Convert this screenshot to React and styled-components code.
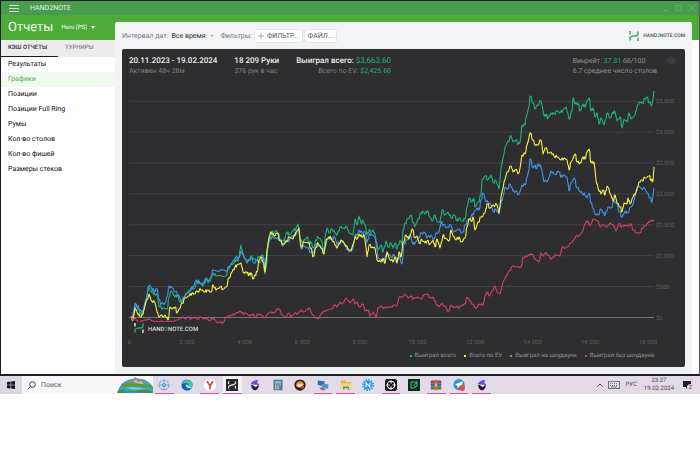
import React from 'react';
import styled, { createGlobalStyle } from 'styled-components';

const menu = [
  'Результаты',
  'Графики',
  'Позиции',
  'Позиции Full Ring',
  'Румы',
  'Кол-во столов',
  'Кол-во фишей',
  'Размеры стеков',
];

const series = [
  {
    name: 'Выиграл всего',
    color: '#1fb47e',
    points:
      '131,317 132,320 135,307 137,306 140,313 143,315 144,307 146,302 148,287 151,291 153,292 155,295 157,294 159,307 163,308 167,309 169,297 171,291 175,297 177,295 180,302 183,300 186,294 189,292 192,287 194,289 197,282 200,283 203,286 206,280 209,282 213,273 216,276 226,276 228,269 231,265 234,263 236,259 238,261 241,245 243,255 247,262 251,256 253,258 256,260 259,257 263,255 265,274 267,260 268,243 271,232 273,233 276,231 278,233 281,242 284,239 287,232 289,235 293,231 296,228 298,224 300,240 302,242 305,240 307,237 309,243 311,242 313,248 316,240 318,237 321,240 324,253 325,237 327,228 329,233 332,229 335,233 337,235 340,227 343,228 347,227 349,233 353,235 355,219 357,225 359,216 361,223 363,221 365,225 367,235 369,230 371,232 373,230 375,235 378,250 381,245 383,252 386,241 388,247 391,243 393,248 395,243 397,249 400,240 402,245 403,230 405,223 408,219 411,215 413,223 415,226 418,219 421,213 423,212 425,214 427,211 430,217 432,221 435,215 437,222 440,222 442,210 445,215 448,212 451,218 454,215 457,221 459,218 462,221 465,219 467,207 469,198 472,202 474,198 475,207 478,202 481,195 482,180 485,176 488,180 491,175 493,182 496,181 499,189 501,168 505,147 508,141 511,136 513,142 516,140 518,144 520,142 522,125 525,125 526,117 529,107 530,96 533,103 535,109 537,105 541,101 544,116 546,115 548,118 551,113 554,114 557,111 560,113 563,110 566,107 569,119 572,111 573,98 575,104 578,103 580,111 583,104 585,107 587,101 589,98 591,111 593,108 595,117 597,113 599,124 601,118 604,125 607,113 610,118 613,112 615,112 617,121 620,117 622,128 624,119 627,122 629,113 631,119 635,115 637,107 639,102 642,103 645,99 647,97 649,103 652,105 654,91',
  },
  {
    name: 'Всего по EV',
    color: '#f2f24a',
    points:
      '131,317 133,320 135,308 137,312 140,317 143,314 145,305 149,294 151,300 155,303 157,312 159,317 165,315 168,320 170,307 172,309 175,307 177,313 179,309 182,303 185,298 189,296 192,293 194,294 197,291 201,290 205,292 207,290 211,292 213,285 216,290 220,287 223,289 226,287 229,278 232,272 235,267 237,265 241,263 243,272 247,273 249,275 251,273 253,279 255,275 257,272 259,260 261,257 263,262 265,272 267,250 269,237 271,232 274,236 277,233 280,241 283,244 287,241 289,237 293,239 296,232 299,228 300,240 301,247 304,242 308,243 311,248 313,257 316,247 318,243 321,248 324,254 326,240 329,237 331,238 335,245 337,248 341,240 344,243 348,249 351,251 355,237 357,239 359,234 362,237 364,235 366,247 367,257 369,245 372,247 375,248 377,260 381,262 383,259 385,263 387,252 389,258 393,262 395,257 397,263 399,252 401,257 403,242 406,235 409,239 412,229 415,238 417,236 419,243 422,240 425,243 427,241 430,244 433,240 435,247 437,239 440,248 443,235 445,238 449,241 451,230 453,236 456,240 459,237 461,242 465,238 467,227 469,219 472,221 473,217 475,230 478,222 481,217 485,213 487,204 490,208 493,205 497,205 499,213 501,197 504,182 507,172 511,166 513,172 515,170 519,173 522,155 525,154 527,145 530,133 533,140 535,145 537,145 541,140 543,154 545,148 549,153 551,152 554,156 557,157 561,160 564,158 567,160 569,170 571,162 575,154 577,162 580,163 583,157 585,159 587,152 589,149 591,163 594,162 596,180 598,188 601,194 603,190 605,195 607,186 611,195 613,201 615,195 617,203 620,207 622,212 624,203 627,204 628,198 630,204 633,197 636,192 639,182 642,180 645,178 649,176 651,180 653,181 654,167',
  },
  {
    name: 'Выиграл на шоудауне',
    color: '#3f96ea',
    points:
      '131,317 132,319 135,303 137,306 139,308 142,313 145,303 147,295 149,285 151,287 154,291 157,289 159,300 161,304 165,303 167,297 169,286 172,288 175,292 179,295 181,302 184,297 187,293 191,289 193,287 196,280 199,282 202,285 205,279 209,280 211,277 213,270 226,271 229,267 232,263 235,258 239,257 241,251 244,257 247,263 251,258 254,263 257,260 260,263 263,257 265,267 267,250 270,238 273,237 277,239 280,239 283,246 285,240 288,242 291,237 294,235 297,232 299,230 301,248 304,246 307,248 311,252 313,253 316,244 319,246 323,250 325,248 327,240 329,237 333,240 334,236 337,244 340,242 343,241 346,247 349,252 353,249 355,235 357,235 359,230 362,233 365,232 367,243 369,235 371,234 375,237 378,258 381,260 385,258 387,252 391,257 394,255 397,261 399,257 402,264 404,243 407,240 410,235 413,244 415,243 419,237 421,233 425,233 427,238 431,235 433,239 437,233 439,232 441,222 443,225 447,227 451,225 453,232 457,230 463,232 465,225 468,220 471,217 474,212 477,208 479,210 481,200 483,193 486,202 490,203 493,211 496,210 499,214 501,203 503,197 505,187 507,189 510,184 513,191 515,192 519,194 522,185 525,185 527,177 529,170 530,159 533,168 535,165 536,169 538,164 541,167 544,182 548,180 551,171 554,174 559,172 561,177 563,175 567,177 569,191 571,183 574,178 577,188 580,191 582,193 585,195 587,198 589,193 591,203 593,208 595,214 598,215 601,209 603,213 605,215 608,207 611,208 614,201 617,204 619,212 622,217 625,211 627,213 631,207 633,205 635,195 638,186 641,188 645,189 647,193 650,198 652,202 654,188',
  },
  {
    name: 'Выиграл без шоудауна',
    color: '#d43f70',
    points:
      '131,317 133,320 135,318 138,322 143,321 148,319 153,321 158,322 167,321 173,322 180,318 183,317 185,319 188,317 191,319 195,317 197,319 201,317 203,319 207,318 209,321 212,318 215,320 217,323 220,322 223,323 226,317 229,316 232,315 235,314 240,311 243,314 245,313 250,316 253,314 255,317 258,314 261,315 265,318 268,313 271,312 274,313 277,309 279,309 282,315 285,317 289,313 291,317 295,313 297,314 301,310 303,312 307,310 309,308 312,314 315,317 318,319 321,314 323,312 327,310 331,309 335,305 337,307 340,302 342,304 346,298 350,303 353,299 355,304 357,302 359,307 363,304 365,311 368,310 370,316 373,312 376,317 378,308 381,306 383,308 387,307 391,307 394,305 397,306 399,297 402,297 405,294 408,298 411,296 413,299 417,297 421,299 424,295 427,294 430,298 433,297 436,304 439,307 441,304 445,306 448,312 451,305 454,308 457,306 459,308 462,305 465,304 467,297 470,301 472,304 476,308 479,304 483,305 485,296 487,292 489,296 492,291 495,286 497,292 500,294 503,282 506,276 509,271 513,266 516,267 521,267 523,257 526,257 529,255 532,254 535,259 539,262 541,253 543,256 545,253 548,255 551,259 553,257 556,255 560,256 562,247 565,248 567,247 571,243 573,241 576,236 579,236 582,232 585,224 587,221 590,226 593,219 598,221 600,227 603,225 607,227 610,223 614,226 616,231 619,223 621,227 625,225 628,226 631,224 633,230 637,233 640,233 642,228 645,226 648,223 650,221 654,220',
  },
];

const money = ['$0', '$500', '$1,000', '$1,500', '$2,000', '$2,500', '$3,000', '$3,500'];
const hands = ['0', '2 000', '4 000', '6 000', '8 000', '10 000', '12 000', '14 000', '16 000', '18 000'];

// green is drawn first, then blue, yellow and pink on top
const drawOrder = [0, 2, 1, 3];

// adds the small swings between the stored points
const roughen = (points, amount) => {
  const list = points.split(' ').map((p) => p.split(',').map(Number));
  const out = [];
  list.forEach(([x, y], i) => {
    out.push(`${x},${y}`);
    const next = list[i + 1];
    if (!next || next[0] - x < 2) return;
    const swing = Math.sin(x * 12.9898) * amount;
    out.push(`${x + (next[0] - x) * 0.4},${y + (next[1] - y) * 0.3 + swing}`);
    out.push(`${x + (next[0] - x) * 0.7},${y + (next[1] - y) * 0.7 - swing}`);
  });
  return out.join(' ');
};

const LogoMark = ({ light }) => (
  <g fill="none" strokeWidth="1.4">
    <path d="M1 0v3.500M9 6.500V10" stroke={light ? '#e8e8e8' : '#77797b'} />
    <path d="M9 0.500v3.400L7.500 4.800L2.500 5.400L1 6.300V9.500" stroke="#2fa95a" />
  </g>
);

const Chart = () => (
  <ChartSvg viewBox="122 82 563 267" role="img" aria-label="Графики">
    {money.map((label, i) => {
      const y = 317.5 - i * 30.9;
      return (
        <g key={label}>
          <line x1="129" x2="654" y1={y} y2={y} stroke={i ? '#414344' : '#747677'} strokeWidth="1" />
          <AxisText x="656" y={y + 2}>{label}</AxisText>
        </g>
      );
    })}
    {hands.map((label, i) => (
      <AxisText key={label} x={129.5 + i * 57.6} y="344" textAnchor="middle">
        {label}
      </AxisText>
    ))}
    {drawOrder.map((n) => (
      <polyline
        key={n}
        points={roughen(series[n].points, n === 3 ? 0.8 : 1.6)}
        fill="none"
        stroke={series[n].color}
        strokeWidth="1.1"
        strokeLinejoin="round"
      />
    ))}
    <rect x="133" y="322" width="64" height="12" fill="#2e2d2f" />
    <g transform="translate(134 323)">
      <LogoMark light />
    </g>
    <WatermarkText x="148" y="331">
      HAND<tspan fill="#35a35a">2</tspan>NOTE.COM
    </WatermarkText>
  </ChartSvg>
);

const appIcons = [
  {
    name: 'Atom',
    open: true,
    art: (
      <g fill="none" stroke="#3d8fd0" strokeWidth="1.2">
        <circle cx="8" cy="8" r="6.5" strokeDasharray="4 1.5" />
        <circle cx="8" cy="8" r="2.4" />
        <path d="M8 1v14M1 8h14" stroke="#63a9dc" />
      </g>
    ),
  },
  {
    name: 'Edge',
    art: (
      <g>
        <circle cx="8" cy="8" r="7.5" fill="#1877c4" />
        <path d="M1 7C2 1 14-1 15.5 7c0 4-5 4-6 2 1-2-1-4-3-4S2 6 1 7z" fill="#3ec9a4" />
        <path d="M6 7c-3 3 0 7 6 6-3 3-8 2-10-1-2-4 1-6 4-5z" fill="#145aa5" />
        <path d="M7 7c-1 3 1 5 6 5l2-2c-3 1-5 0-6-1z" fill="#e7f4fa" />
      </g>
    ),
  },
  {
    name: 'Yandex',
    open: true,
    art: (
      <g>
        <circle cx="8" cy="8" r="8" fill="#fff" />
        <path d="M4 3l4 6 4-6M8 8v6" fill="none" stroke="#e4402f" strokeWidth="2.2" />
      </g>
    ),
  },
  {
    name: 'Hand2Note',
    open: true,
    active: true,
    art: (
      <g>
        <rect width="16" height="16" fill="#22282b" />
        <path d="M3.500 3v4M12.500 3v3L10 7.500 6 8.500 3.500 10v3M12.500 9v4" fill="none" stroke="#eee" strokeWidth="1.5" />
      </g>
    ),
  },
  {
    name: 'Acorn',
    art: (
      <g>
        <path d="M2 7c2-4 5-5 10-6l-1 4 3 3z" fill="#7046dc" />
        <path d="M3 8h10c0 5-3 7-5 7s-5-2-5-7z" fill="#262335" />
        <path d="M5 8h7l-3 3z" fill="#f3edf6" />
      </g>
    ),
  },
  {
    name: 'Calculator',
    art: (
      <g>
        <rect x="2" y="1" width="12" height="14" fill="#5d7180" />
        <rect x="4" y="3" width="8" height="3" fill="#7cd0ee" />
        <path d="M4 8h8M4 10.500h8M4 13h8" stroke="#dbe6ec" strokeWidth="1.4" strokeDasharray="2 1" />
        <rect x="10" y="9" width="2" height="5" fill="#2b84c5" />
      </g>
    ),
  },
  {
    name: 'Tracker',
    art: (
      <g>
        <circle cx="8" cy="8" r="7.5" fill="#28211f" />
        <path d="M2.500 9c0-8 10-8 11-1l-3 1-3-2-3 4z" fill="#e79a2e" />
        <path d="M5 7h6l2 4H5z" fill="#f4f1ec" />
        <circle cx="11" cy="11" r="2" fill="#cc452e" />
      </g>
    ),
  },
  {
    name: 'Remote',
    open: true,
    art: (
      <g>
        <path d="M1 2l9 1v7l-9-2z" fill="#336cbd" />
        <path d="M6 6l9 1v6l-8-1z" fill="#5592d7" />
        <path d="M3 11l6 1 3 3H6z" fill="#76797d" />
      </g>
    ),
  },
  {
    name: 'Explorer',
    open: true,
    art: (
      <g>
        <path d="M1 2h6l1 2h7v10H1z" fill="#e8b64a" />
        <path d="M1 6h14v8H1z" fill="#f8d778" />
        <path d="M4 14v-4h8v4h-2v-2H6v2z" fill="#4b91c9" />
      </g>
    ),
  },
  {
    name: 'Notes',
    art: (
      <g>
        <circle cx="8" cy="8" r="6" fill="#2598e5" />
        <circle cx="8" cy="8" r="7" fill="none" stroke="#2598e5" strokeWidth="2" strokeDasharray="2 1.600" />
        <path d="M5.500 11V5l5 6V5" fill="none" stroke="#fff" strokeWidth="1.500" />
      </g>
    ),
  },
  {
    name: 'Chip',
    open: true,
    art: (
      <g>
        <rect width="16" height="16" rx="3" fill="#15151a" />
        <circle cx="8" cy="8" r="5" fill="none" stroke="#fff" strokeWidth="1.600" />
        <path d="M8 2v4M8 10v4M2 8h4M10 8h4" stroke="#fff" strokeWidth="1.600" />
      </g>
    ),
  },
  {
    name: 'Equity',
    art: (
      <g>
        <rect width="16" height="16" fill="#102a24" />
        <path d="M4 4h8v5l-4 3H4zM7 9l5-5" fill="none" stroke="#3dbb72" strokeWidth="1.400" />
      </g>
    ),
  },
  {
    name: 'WinRAR',
    open: true,
    art: (
      <g>
        <path d="M1 2h14v4H1z" fill="#a63a75" />
        <path d="M1 6h14v4H1z" fill="#3b64a8" />
        <path d="M1 10h14v4H1z" fill="#3f8548" />
        <path d="M6 1h4v14H6z" fill="#bd7432" />
        <path d="M7 6h2v4H7z" fill="#efd579" />
      </g>
    ),
  },
  {
    name: 'Telegram',
    open: true,
    art: (
      <g>
        <circle cx="8" cy="7.500" r="7.500" fill="#2c9bd0" />
        <path d="M3 7l10-4-2 9-3-2-2 2V9z" fill="#fff" />
        <circle cx="12" cy="12" r="4" fill="#e6503c" />
      </g>
    ),
  },
  {
    name: 'Acorn 2',
    open: true,
    art: (
      <g>
        <path d="M2 7c2-4 5-5 10-6l-1 4 3 3z" fill="#6548e2" />
        <path d="M3 8h10c0 5-3 7-5 7s-5-2-5-7z" fill="#201d2b" />
        <path d="M5 8h7l-3 3z" fill="#f3edf6" />
      </g>
    ),
  },
];

const App = () => {
  return (
    <>
      <GlobalStyle />
      <AppWindow>
        <TitleBar>
          <IconButton aria-label="Меню">
            <svg width="10" height="7" viewBox="0 0 10 7" stroke="#cfe8cf" strokeWidth="1">
              <path d="M0 0.500h10M0 3.500h10M0 6.500h10" />
            </svg>
          </IconButton>
          <TitleText>HAND2NOTE</TitleText>
          <WindowButtons>
            <IconButton aria-label="Свернуть">
              <svg width="8" height="8" viewBox="0 0 8 8" stroke="#72ad70" fill="none">
                <path d="M2 6.500h4" />
              </svg>
            </IconButton>
            <IconButton aria-label="Развернуть">
              <svg width="8" height="8" viewBox="0 0 8 8" stroke="#6aa866" fill="none">
                <path d="M1.500 1.500h5v5h-5z" />
              </svg>
            </IconButton>
            <IconButton aria-label="Закрыть">
              <svg width="8" height="8" viewBox="0 0 8 8" stroke="#72ad70" fill="none">
                <path d="M0.500 0.500l7 7M7.500 0.500l-7 7" />
              </svg>
            </IconButton>
          </WindowButtons>
        </TitleBar>
        <Body>
          <Sidebar>
            <SidebarHead>
              <Heading>Отчеты</Heading>
              <SelectBox $white>
                <select aria-label="Игрок">
                  <option>Hero (PS)</option>
                </select>
                <Caret />
              </SelectBox>
            </SidebarHead>
            <Tabs>
              <Tab $active>КЭШ ОТЧЕТЫ</Tab>
              <Tab>ТУРНИРЫ</Tab>
            </Tabs>
            <nav>
              {menu.map((item) => (
                <MenuLink key={item} href="#" $active={item === 'Графики'}>
                  {item}
                </MenuLink>
              ))}
            </nav>
          </Sidebar>
          <Main>
            <Toolbar>
              <label htmlFor="range">Интервал дат:</label>
              <SelectBox>
                <select id="range">
                  <option>Все время</option>
                </select>
                <Caret />
              </SelectBox>
              <Filters>
                <span>Фильтры:</span>
                <FilterButton>
                  <svg width="6" height="6" viewBox="0 0 6 6" stroke="#aaa" strokeWidth="1">
                    <path d="M3 0v6M0 3h6" />
                  </svg>
                  ФИЛЬТР...
                </FilterButton>
                <FilterButton>ФАЙЛ...</FilterButton>
              </Filters>
              <Brand href="#">
                <svg width="10" height="10" viewBox="0 0 10 10">
                  <LogoMark />
                </svg>
                <span>
                  HAND<em>2</em>NOTE.COM
                </span>
              </Brand>
            </Toolbar>
            <ChartPanel>
              <ChartHead>
                <Stats>
                  <Stat>
                    <StatTitle>20.11.2023 - 19.02.2024</StatTitle>
                    <StatNote>Активен 48ч 28м</StatNote>
                  </Stat>
                  <Stat>
                    <StatTitle>18 209 Руки</StatTitle>
                    <StatNote>376 рук в час</StatNote>
                  </Stat>
                  <Stat $right>
                    <StatTitle>
                      Выиграл всего: <em>$3,663.60</em>
                    </StatTitle>
                    <StatNote>
                      Всего по EV: <em>$2,425.60</em>
                    </StatNote>
                  </Stat>
                </Stats>
                <Winrate>
                  <div>
                    Винрейт: <em>37.31</em> бб/100
                  </div>
                  <div>6.7 среднее число столов</div>
                </Winrate>
                <IconButton aria-label="Настройки">
                  <svg width="9" height="9" viewBox="0 0 9 9" fill="none" stroke="#555657">
                    <circle cx="4.500" cy="4.500" r="3.500" strokeDasharray="1.600 0.600" />
                    <circle cx="4.500" cy="4.500" r="1.500" />
                  </svg>
                </IconButton>
              </ChartHead>
              <Chart />
              <Legend>
                {series.map((s, i) => (
                  <LegendItem key={s.name} $color={i === 2 ? '#8b8f92' : s.color}>
                    {s.name}
                  </LegendItem>
                ))}
              </Legend>
            </ChartPanel>
          </Main>
        </Body>
      </AppWindow>
      <Taskbar>
        <StartButton aria-label="Пуск">
          <svg width="8" height="8" viewBox="0 0 8 8" fill="#17161b">
            <path d="M0 1l3.600-.5v3.200H0zM4.200.4L8 0v3.700H4.200zM0 4.300h3.600v3.200L0 7zM4.200 4.300H8V8l-3.800-.4z" />
          </svg>
        </StartButton>
        <Search>
          <svg width="9" height="9" viewBox="0 0 9 9" fill="none" stroke="#444">
            <circle cx="5.500" cy="3.500" r="2.800" />
            <path d="M3.500 5.500L0.800 8.300" />
          </svg>
          <input type="text" placeholder="Поиск" aria-label="Поиск" />
          <svg width="36" height="16" viewBox="0 0 36 16">
            <path d="M0 16C3 7 8 2 18 1.500S33 5 36 10v6z" fill="#3aa8bd" />
            <path d="M9 7l4-4 2 1 3-4 4 3 3-1 5 6z" fill="#85858a" />
            <path d="M16 5l3-3 2 3 4-1 2 4z" fill="#c5b8a0" />
            <path d="M4 7c8-2 20 0 30 1l2 4c-8-3-21-2-30-2z" fill="#5b9a42" />
            <path d="M8 11c8-2 14-1 20 1-8 2-14 0-20-1z" fill="#68cfd3" />
            <path d="M0 16c2-4 5-4 9-2 8 0 15-2 20-1 3 0 5 1 7 3z" fill="#4e8a3a" />
            <path d="M7 14c7 2 12-1 19 2H8z" fill="#328fc2" />
          </svg>
        </Search>
        <AppList>
          {appIcons.map((icon) => (
            <AppButton key={icon.name} aria-label={icon.name} $open={icon.open} $active={icon.active}>
              <svg width="12" height="12" viewBox="0 0 16 16">
                {icon.art}
              </svg>
            </AppButton>
          ))}
        </AppList>
        <Tray>
          <svg width="6" height="4" viewBox="0 0 6 4" fill="none" stroke="#444">
            <path d="M0.500 3.500L3 1l2.500 2.500" />
          </svg>
          <svg width="12" height="8" viewBox="0 0 12 8" fill="none" stroke="#77747b">
            <rect x="0.500" y="0.500" width="11" height="7" />
            <path d="M2 2.500h8M2 4.500h8" strokeDasharray="1 1" />
            <path d="M3 6h6" />
          </svg>
          <span>РУС</span>
          <Clock>
            <div>23:27</div>
            <div>19.02.2024</div>
          </Clock>
          <Notice aria-label="Уведомления">
            <svg width="9" height="9" viewBox="0 0 9 9" fill="#1f1d22">
              <path d="M0 0h8v6H5L3 8V6H0z" />
            </svg>
            <Badge>2</Badge>
          </Notice>
        </Tray>
      </Taskbar>
    </>
  );
};

const GlobalStyle = createGlobalStyle`
  * {
    box-sizing: border-box;
  }

  body {
    margin: 0;
    background-color: #ffffff;
    font-family: Roboto, "Liberation Sans", sans-serif;
    font-size: 7px;
    line-height: 10px;
    color: #2b2b2d;
    text-rendering: geometricPrecision;
  }

  button, select, input {
    margin: 0;
    padding: 0;
    border: 0;
    background: none;
    font: inherit;
    color: inherit;
    text-rendering: inherit;
  }

  select {
    appearance: none;
  }

  em {
    font-style: normal;
    color: #1fb47e;
  }

  svg {
    display: block;
    flex: none;
  }
`;

const AppWindow = styled.div`
  border: 1px solid #1d1f24;
  border-right-color: #55555a;
  border-bottom-width: 2px;
  background-color: #ffffff;
`;

const TitleBar = styled.header`
  display: flex;
  align-items: center;
  height: 14px;
  padding: 0 3px 0 8px;
  background-color: #479c4e;
  color: #e4f3e4;
`;

const TitleText = styled.div`
  margin-left: 11px;
`;

const WindowButtons = styled.div`
  display: flex;
  gap: 5px;
  margin-left: auto;
`;

const IconButton = styled.button`
  display: flex;
  align-items: center;
`;

const Body = styled.div`
  display: flex;
  padding-right: 7px;
  background: linear-gradient(#4dab37 25px, #ffffff 25px);
`;

const Sidebar = styled.aside`
  flex: none;
  width: 114px;
`;

const SidebarHead = styled.div`
  display: flex;
  align-items: center;
  gap: 8px;
  height: 25px;
  padding-left: 7px;
  color: #f2faf0;
`;

const Heading = styled.h1`
  margin: 0;
  font-size: 13px;
  line-height: 20px;
  font-weight: 400;
`;

const SelectBox = styled.div`
  display: flex;
  align-items: center;
  gap: 4px;
  font-size: ${(props) => (props.$white ? '6px' : '7px')};
  color: ${(props) => (props.$white ? '#ffffff' : '#2f2f31')};

  span {
    border-width: ${(props) => (props.$white ? '3px 2px 0' : '2px 2px 0')};
    border-top-color: ${(props) => (props.$white ? '#ffffff' : '#aaaaaa')};
  }
`;

const Caret = styled.span`
  border: 0 solid transparent;
`;

const Tabs = styled.div`
  display: flex;
  height: 17px;
  background-color: #ececec;
`;

const Tab = styled.button`
  flex: 1;
  padding-left: 7px;
  border-bottom: ${(props) => (props.$active ? '1px solid #1c1c1e' : '1px solid transparent')};
  font-size: 6px;
  font-weight: 500;
  text-align: left;
  color: ${(props) => (props.$active ? '#2b2b2d' : '#858587')};
`;

const MenuLink = styled.a`
  display: block;
  padding-left: 7px;
  line-height: 15px;
  text-decoration: none;
  color: ${(props) => (props.$active ? '#55b34a' : '#0c0c0e')};
  background-color: ${(props) => (props.$active ? '#f1f8f0' : 'transparent')};
`;

const Main = styled.main`
  flex: 1;
  min-width: 0;
  margin-top: 7px;
  padding: 0 7px 7px;
  border-radius: 2px 2px 0 0;
  background-color: #f2f3f4;
`;

const Toolbar = styled.div`
  display: flex;
  align-items: center;
  gap: 3px;
  height: 27px;
  color: #77787a;
`;

const Filters = styled.div`
  display: flex;
  align-items: center;
  gap: 3px;
  margin-left: 3px;
`;

const FilterButton = styled.button`
  display: flex;
  align-items: center;
  gap: 3px;
  height: 12px;
  padding: 0 3px;
  border-radius: 1px;
  background-color: #ffffff;
  box-shadow: 0 0 2px rgba(0, 0, 0, 0.2);
  color: #58585a;
`;

const Brand = styled.a`
  display: flex;
  align-items: center;
  gap: 4px;
  margin-left: auto;
  font-size: 5px;
  font-weight: 500;
  text-decoration: none;
  color: #4c4d4f;
`;

const ChartPanel = styled.section`
  border-radius: 2px;
  background-color: #2e2d2f;
  color: #919294;
`;

const ChartHead = styled.div`
  display: flex;
  align-items: flex-start;
  height: 33px;
  padding: 7px 9px 0 7px;
  gap: 10px;
`;

const Stats = styled.div`
  display: flex;
  gap: 17px;
`;

const Stat = styled.div`
  text-align: ${(props) => (props.$right ? 'right' : 'left')};
`;

const StatTitle = styled.div`
  font-size: 8px;
  font-weight: 500;
  color: #efefef;

  em {
    font-weight: 400;
  }
`;

const StatNote = styled.div`
  color: #818284;
`;

const Winrate = styled.div`
  margin-left: auto;
`;

const ChartSvg = styled.svg`
  width: 100%;
  height: auto;
`;

const AxisText = styled.text`
  font-size: 6px;
  fill: #606163;
`;

const WatermarkText = styled.text`
  font-size: 6px;
  font-weight: 500;
  fill: #dededf;
`;

const Legend = styled.div`
  display: flex;
  justify-content: flex-end;
  gap: 8px;
  padding: 2px 31px 6px;
  font-size: 6px;
`;

const LegendItem = styled.div`
  display: flex;
  align-items: center;
  gap: 3px;

  &::before {
    content: '';
    width: 2px;
    height: 2px;
    background-color: ${(props) => props.$color};
  }
`;

const Taskbar = styled.footer`
  display: flex;
  height: 18px;
  background-color: #e2dbe7;
`;

const StartButton = styled.button`
  display: flex;
  align-items: center;
  justify-content: center;
  width: 22px;
  background-color: #dcd7e1;
`;

const Search = styled.div`
  display: flex;
  align-items: center;
  flex: none;
  gap: 5px;
  width: 131px;
  padding-left: 5px;
  background-color: #f8f6f9;

  input {
    flex: 1;
    min-width: 0;
  }

  input::placeholder {
    color: #5d5b60;
    opacity: 1;
  }
`;

const AppList = styled.div`
  display: flex;
  flex: 0 1 340px;
`;

const AppButton = styled.button`
  display: flex;
  flex: 1;
  align-items: center;
  justify-content: center;
  margin: 0 2px;
  border-bottom: 1px solid ${(props) => (props.$open ? '#d84f9f' : 'transparent')};
  background-color: ${(props) => (props.$active ? '#f4f0f6' : 'transparent')};
`;

const Tray = styled.div`
  display: flex;
  align-items: center;
  gap: 5px;
  margin-left: auto;
  padding-right: 8px;
  font-size: 6px;
  color: #4a484e;
`;

const Clock = styled.div`
  margin: 0 4px 0 2px;
  text-align: center;
  line-height: 8px;
`;

const Notice = styled.button`
  position: relative;
`;

const Badge = styled.span`
  position: absolute;
  top: 3px;
  left: 4px;
  width: 7px;
  height: 7px;
  border-radius: 4px;
  background-color: #e2dbe7;
  font-size: 6px;
  line-height: 7px;
`;

export default App;
